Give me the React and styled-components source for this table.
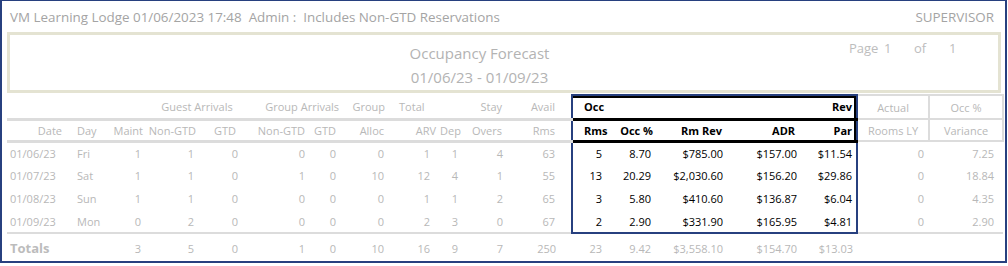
import React from "react";
import styled, { createGlobalStyle, css } from "styled-components";

const NAVY = "#27407f";
const RULE = "#dcdcdc";
const MUTED = "#b8b8b8";

const GlobalStyle = createGlobalStyle`
  html, body { margin: 0; padding: 0; background: #fff; }
  body { font-family: "Open Sans", "Liberation Sans", sans-serif; }
`;

const Frame = styled.div`
  width: 1007px;
  height: 263px;
  box-sizing: border-box;
  border: 2px solid ${NAVY};
  border-top-width: 1px;
  padding: 0 3px 0 5px;
  overflow: hidden;
`;

const TitleBar = styled.div`
  height: 31px;
  display: flex;
  align-items: center;
  justify-content: space-between;
  padding: 0 8px 0 3px;
  font-size: 13.4px;
  color: #a4a4a4;
  white-space: pre;
`;

const ReportHeader = styled.div`
  height: 61px;
  box-sizing: border-box;
  border: 3px solid #e4e3d2;
  display: flex;
  margin-right: 1px;
`;

const Titles = styled.div`
  flex: 1;
  padding: 6px 0 0 100px;
  text-align: center;
  font-size: 15px;
  line-height: 24px;
  color: #b3b3b3;
`;

const PageInfo = styled.div`
  display: flex;
  width: 106px;
  margin-right: 43px;
  padding-top: 3px;
  font-size: 13px;
  line-height: 20px;
  color: #bdbdbd;
`;

const PageBit = styled.span`
  width: ${(p) => p.$w}px;
`;

const Table = styled.table`
  width: 996px;
  table-layout: fixed;
  border-collapse: collapse;
  margin-top: 1px;
  font-size: 11px;
`;

const Cell = styled.td`
  padding: 0;
  padding-left: ${(p) => p.$pl || 0}px;
  padding-right: ${(p) => p.$pr || 0}px;
  text-align: ${(p) => p.$align || "right"};
  white-space: nowrap;
  color: ${(p) => (p.$dark ? "#000" : MUTED)};
  font-weight: ${(p) => (p.$bold ? 700 : 400)};
  ${(p) => p.$rule && css`border-bottom: 3px solid ${RULE};`}
  ${(p) => p.$black && css`border-bottom: 3px solid #000;`}
  ${(p) => p.$boxed && css`border: 2px solid ${RULE};`}
  ${(p) => p.$gl && css`border-left: 2px solid ${NAVY};`}
  ${(p) => p.$gr && css`border-right: 2px solid ${NAVY};`}
  ${(p) => p.$gt && css`border-top: 2px solid ${NAVY};`}
  ${(p) => p.$gb && css`border-bottom: 2px solid ${NAVY};`}
  ${(p) => p.$shadow && css`box-shadow: ${p.$shadow};`}
`;

const HeadRow = styled.tr`
  height: ${(p) => p.$h}px;
`;

const DataRow = styled.tr`
  height: 23px;
`;

const TotalsRow = styled.tr`
  height: 25px;

  & > td {
    border-top: 2px solid ${RULE};
    line-height: 14px;
    padding-top: 5px;
  }
`;

const TotalsLabel = styled.span`
  font-size: 13px;
  font-weight: 700;
  color: #bcbcbc;
`;

// width, header-2 label, header padding, data padding, group flag
const columns = [
  { w: 59, label: "Date", hp: { $pr: 4 }, dp: { $align: "left", $pl: 3 } },
  { w: 42, label: "Day", hp: { $align: "left", $pl: 11 }, dp: { $align: "left", $pl: 11 } },
  { w: 40, label: "Maint", hp: { $pr: 5 }, dp: { $pr: 7 } },
  { w: 54, label: "Non-GTD", hp: { $pr: 6 }, dp: { $pr: 8 } },
  { w: 40, label: "GTD", hp: { $pr: 6 }, dp: { $pr: 4 } },
  { w: 68, label: "Non-GTD", hp: { $pr: 5 }, dp: { $pr: 5 } },
  { w: 32, label: "GTD", hp: { $pr: 6 }, dp: { $pr: 6 } },
  { w: 48, label: "Alloc", hp: { $pr: 6 }, dp: { $pr: 6 } },
  { w: 48, label: "ARV", hp: { $pr: 2 }, dp: { $pr: 8 } },
  { w: 27, label: "Dep", hp: { $align: "left", $pl: 2 }, dp: { $pr: 7 } },
  { w: 43, label: "Overs", hp: { $pr: 6 }, dp: { $pr: 5 } },
  { w: 64, label: "Rms", hp: { $pr: 16 }, dp: { $pr: 16 } },
  { w: 38, label: "Rms", hp: { $align: "left", $pl: 11 }, dp: { $pr: 8 }, g: true },
  { w: 50, label: "Occ %", hp: { $pr: 7 }, dp: { $pr: 9 }, g: true },
  { w: 75, label: "Rm Rev", hp: { $pr: 13 }, dp: { $pr: 12 }, g: true },
  { w: 65, label: "ADR", hp: { $pr: 5 }, dp: { $pr: 3 }, g: true },
  { w: 57, label: "Par", hp: { $pr: 4 }, dp: { $pr: 4 }, g: true },
  { w: 72, label: "Rooms LY", hp: { $align: "center" }, dp: { $pr: 5 }, box: true },
  { w: 74, label: "Variance", hp: { $align: "center" }, dp: { $pr: 9 }, box: true },
];

const rows = [
  ["01/06/23", "Fri", "1", "1", "0", "0", "0", "0", "1", "1", "4", "63", "5", "8.70", "$785.00", "$157.00", "$11.54", "0", "7.25"],
  ["01/07/23", "Sat", "1", "1", "0", "1", "0", "10", "12", "4", "1", "55", "13", "20.29", "$2,030.60", "$156.20", "$29.86", "0", "18.84"],
  ["01/08/23", "Sun", "1", "1", "0", "0", "0", "0", "1", "1", "2", "65", "3", "5.80", "$410.60", "$136.87", "$6.04", "0", "4.35"],
  ["01/09/23", "Mon", "0", "2", "0", "0", "0", "0", "2", "3", "0", "67", "2", "2.90", "$331.90", "$165.95", "$4.81", "0", "2.90"],
];

const totals = ["3", "5", "0", "1", "0", "10", "16", "9", "7", "250", "23", "9.42", "$3,558.10", "$154.70", "$13.03", "", ""];

const FIRST_G = 12;
const LAST_G = 16;

function edgeProps(i) {
  return { $gl: i === FIRST_G, $gr: i === LAST_G };
}

function OccupancyForecast() {
  return (
    <Frame>
      <TitleBar>
        <span>VM Learning Lodge 01/06/2023 17:48  Admin :  Includes Non-GTD Reservations</span>
        <span>SUPERVISOR</span>
      </TitleBar>
      <ReportHeader>
        <Titles>
          <div>Occupancy Forecast</div>
          <div>01/06/23 - 01/09/23</div>
        </Titles>
        <PageInfo>
          <PageBit $w={35}>Page</PageBit>
          <PageBit $w={30}>1</PageBit>
          <PageBit $w={35}>of</PageBit>
          <PageBit $w={6}>1</PageBit>
        </PageInfo>
      </ReportHeader>
      <Table>
        <colgroup>
          {columns.map((c, i) => (
            <col key={i} style={{ width: c.w }} />
          ))}
        </colgroup>
        <tbody>
          <HeadRow $h={24}>
            <Cell colSpan={3} $rule />
            <Cell colSpan={2} $rule $align="center" $pl={4}>Guest Arrivals</Cell>
            <Cell colSpan={2} $rule $pr={3}>Group Arrivals</Cell>
            <Cell $rule $pr={5}>Group</Cell>
            <Cell $rule $align="left" $pl={9}>Total</Cell>
            <Cell $rule />
            <Cell $rule $pr={6}>Stay</Cell>
            <Cell $rule $pr={16}>Avail</Cell>
            <Cell colSpan={4} $black $gl $gt $dark $bold $align="left" $pl={11} $shadow="inset 0 2px 0 #000">
              Occ
            </Cell>
            <Cell $black $gr $gt $dark $bold $pr={4} $shadow="inset 0 2px 0 #000, inset -2px 0 0 #000">
              Rev
            </Cell>
            <Cell $boxed $align="center">Actual</Cell>
            <Cell $boxed $align="center">Occ %</Cell>
          </HeadRow>
          <HeadRow $h={22}>
            {columns.map((c, i) =>
              c.g ? (
                <Cell
                  key={i}
                  {...c.hp}
                  {...edgeProps(i)}
                  $black
                  $dark
                  $bold
                  $shadow={i === LAST_G ? "inset -2px 0 0 #000" : undefined}
                >
                  {c.label}
                </Cell>
              ) : c.box ? (
                <Cell key={i} {...c.hp} $boxed>
                  {c.label}
                </Cell>
              ) : (
                <Cell key={i} {...c.hp} $rule>
                  {c.label}
                </Cell>
              )
            )}
          </HeadRow>
          {rows.map((r, ri) => {
            const last = ri === rows.length - 1;
            return (
              <DataRow key={ri}>
                {r.map((v, i) => {
                  const c = columns[i];
                  return (
                    <Cell key={i} {...c.dp} {...edgeProps(i)} $dark={c.g} $gb={last && c.g}>
                      {v}
                    </Cell>
                  );
                })}
              </DataRow>
            );
          })}
          <TotalsRow>
            <Cell colSpan={2} $align="left" $pl={3}>
              <TotalsLabel>Totals</TotalsLabel>
            </Cell>
            {totals.map((v, i) => (
              <Cell key={i} {...columns[i + 2].dp}>
                {v}
              </Cell>
            ))}
          </TotalsRow>
        </tbody>
      </Table>
    </Frame>
  );
}

export default function App() {
  return (
    <>
      <GlobalStyle />
      <OccupancyForecast />
    </>
  );
}
